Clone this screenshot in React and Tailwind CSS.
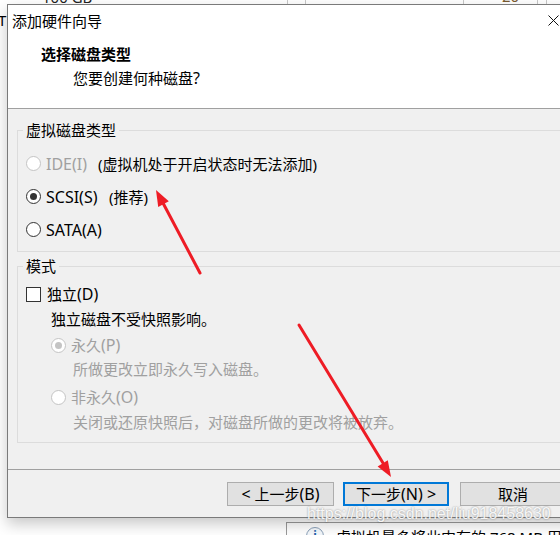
import React from "react";

const Radio = ({ checked = false, disabled = false }) => (
  <span
    className={`flex h-[15px] w-[15px] shrink-0 items-center justify-center rounded-full border bg-white ${
      disabled ? "border-[#c4c4c4]" : "border-[#333333]"
    }`}
  >
    {checked && (
      <span
        className={`h-[7px] w-[7px] rounded-full ${
          disabled ? "bg-[#c4c4c4]" : "bg-[#333333]"
        }`}
      />
    )}
  </span>
);

// latin bits render a little larger than the CJK glyphs in the original UI font
const L = ({ children }) => <span className="text-[16px]">{children}</span>;

const Button = ({ children, className = "" }) => (
  <div
    className={`flex h-[24px] items-center justify-center bg-[#e1e1e1] text-[15px] leading-[20px] ${className}`}
  >
    {children}
  </div>
);

const Arrows = () => (
  <svg className="pointer-events-none absolute left-0 top-0" width="560" height="535">
    <g stroke="#ee1c25" strokeWidth="3" strokeLinecap="round" fill="#ee1c25">
      <line x1="200" y1="273" x2="163" y2="203" />
      <polygon points="156,190 168.8,201.3 158.2,206.9" stroke="none" />
      <line x1="299" y1="325" x2="383" y2="463" />
      <polygon points="391,477 387.8,460.2 377.6,466.4" stroke="none" />
    </g>
  </svg>
);

export default function App() {
  return (
    <div className="relative h-[535px] w-[560px] overflow-hidden bg-white font-['Noto_Sans','Noto_Sans_CJK_SC',sans-serif] text-black">
      {/* what lies behind the wizard */}
      <span className="absolute left-[42px] top-[-13px] text-[15px] leading-[20px] text-[#222]">100 GB</span>
      <span className="absolute left-[287px] top-0 h-[4px] w-px bg-[#c8c8c8]" />
      <span className="absolute left-[305px] top-0 h-[4px] w-px bg-[#c8c8c8]" />
      <span className="absolute left-[463px] top-0 h-[4px] w-px bg-[#c8c8c8]" />
      <span className="absolute left-[537px] top-0 h-[4px] w-px bg-[#c8c8c8]" />
      <span className="absolute left-[546px] top-0 h-[4px] w-px bg-[#c8c8c8]" />
      <span className="absolute left-[502px] top-[-14px] text-[15px] leading-[20px] text-[#7a5a30]">20</span>
      <span className="absolute left-[-2px] top-[10px] text-[15px] leading-[20px]">T</span>
      <div className="absolute left-[286px] top-[522px] flex h-[40px] w-[300px] items-start gap-[12px] border-l border-t border-[#9a9a9a] bg-white pl-[19px] pt-[4px]">
        <span className="flex h-[18px] w-[18px] shrink-0 items-center justify-center rounded-full border border-[#8aa0b8] bg-[#f4f8fc] text-[12px] font-bold leading-none text-[#1d5fa8]">
          i
        </span>
        <span className="whitespace-nowrap text-[15px] leading-[20px]">虚拟机最多将此内存的 768 MB 用</span>
      </div>

      {/* wizard window */}
      <div className="absolute left-[7px] top-[4px] flex h-[514px] w-[570px] flex-col border border-[#7a7a7a] bg-[#f0f0f0] shadow-[0_6px_14px_rgba(0,0,0,0.22)]">
        <div className="flex h-[31px] shrink-0 items-center bg-white pl-[4px]">
          <span className="text-[15px] leading-[20px]">添加硬件向导</span>
          <span className="ml-auto flex h-full w-[46px] items-center justify-center">
            <svg width="11" height="11" viewBox="0 0 11 11">
              <path d="M0.5 0.5 L10.5 10.5 M10.5 0.5 L0.5 10.5" stroke="#111" strokeWidth="1" />
            </svg>
          </span>
        </div>

        <div className="h-[73px] shrink-0 border-b border-[#a0a0a0] bg-white pt-[8px]">
          <p className="pl-[33px] text-[15px] font-bold leading-[20px]">选择磁盘类型</p>
          <p className="mt-[4px] pl-[65px] text-[15px] leading-[20px]">
            您要创建何种磁盘<L>?</L>
          </p>
        </div>

        <div className="h-[360px] shrink-0 px-[9px] pt-[11px] text-[15px] leading-[20px]">
          <fieldset className="border border-[#dcdcdc] pb-[5px]">
            <legend className="ml-[5px] px-[3px]">虚拟磁盘类型</legend>
            <div className="mt-[7px]">
              <div className="flex h-[33px] items-center pl-[8px]">
                <Radio disabled />
                <span className="ml-[5px] w-[52px] text-[16px] text-[#a0a0a0]">IDE(I)</span>
                <span>(虚拟机处于开启状态时无法添加)</span>
              </div>
              <div className="flex h-[33px] items-center pl-[8px]">
                <Radio checked />
                <span className="ml-[5px] w-[63px] text-[16px]">SCSI(S)</span>
                <span>(推荐)</span>
              </div>
              <div className="flex h-[33px] items-center pl-[8px]">
                <Radio />
                <span className="ml-[5px] text-[16px]">SATA(A)</span>
              </div>
            </div>
          </fieldset>

          <fieldset className="mt-[4px] border border-[#dcdcdc] pb-[8px]">
            <legend className="ml-[5px] px-[3px]">模式</legend>
            <div className="mt-[6px] flex h-[24px] items-center pl-[8px]">
              <span className="h-[15px] w-[15px] shrink-0 border border-[#333333] bg-white" />
              <span className="ml-[6px]">
                独立<L>(D)</L>
              </span>
            </div>
            <p className="mt-[1px] flex h-[24px] items-center pl-[33px]">独立磁盘不受快照影响。</p>
            <div className="mt-[2px] flex h-[24px] items-center pl-[33px] text-[#a0a0a0]">
              <Radio checked disabled />
              <span className="ml-[5px]">
                永久<L>(P)</L>
              </span>
            </div>
            <p className="flex h-[24px] items-center pl-[55px] text-[#a0a0a0]">所做更改立即永久写入磁盘。</p>
            <div className="mt-[4px] flex h-[24px] items-center pl-[33px] text-[#a0a0a0]">
              <Radio disabled />
              <span className="ml-[5px]">
                非永久<L>(O)</L>
              </span>
            </div>
            <p className="mt-[1px] flex h-[24px] items-center pl-[55px] text-[#a0a0a0]">
              关闭或还原快照后，对磁盘所做的更改将被放弃。
            </p>
          </fieldset>
        </div>

        <div className="flex flex-1 items-start border-t border-[#a0a0a0] pl-[219px] pt-[12px]">
          <Button className="w-[107px] border border-[#adadad]">
            <L>&lt;</L>&nbsp;上一步<L>(B)</L>
          </Button>
          <Button className="ml-[9px] w-[106px] border-2 border-[#0078d7]">
            下一步<L>(N) &gt;</L>
          </Button>
          <Button className="ml-[11px] w-[106px] border border-[#adadad]">取消</Button>
        </div>
      </div>

      <span className="pointer-events-none absolute left-[307px] top-[505px] font-['Liberation_Sans',sans-serif] text-[16px] leading-[18px] text-white/90 [text-shadow:0_0_2px_rgba(0,0,0,0.45)]">
        https://blog.csdn.net/liu918458630
      </span>

      <Arrows />
    </div>
  );
}
